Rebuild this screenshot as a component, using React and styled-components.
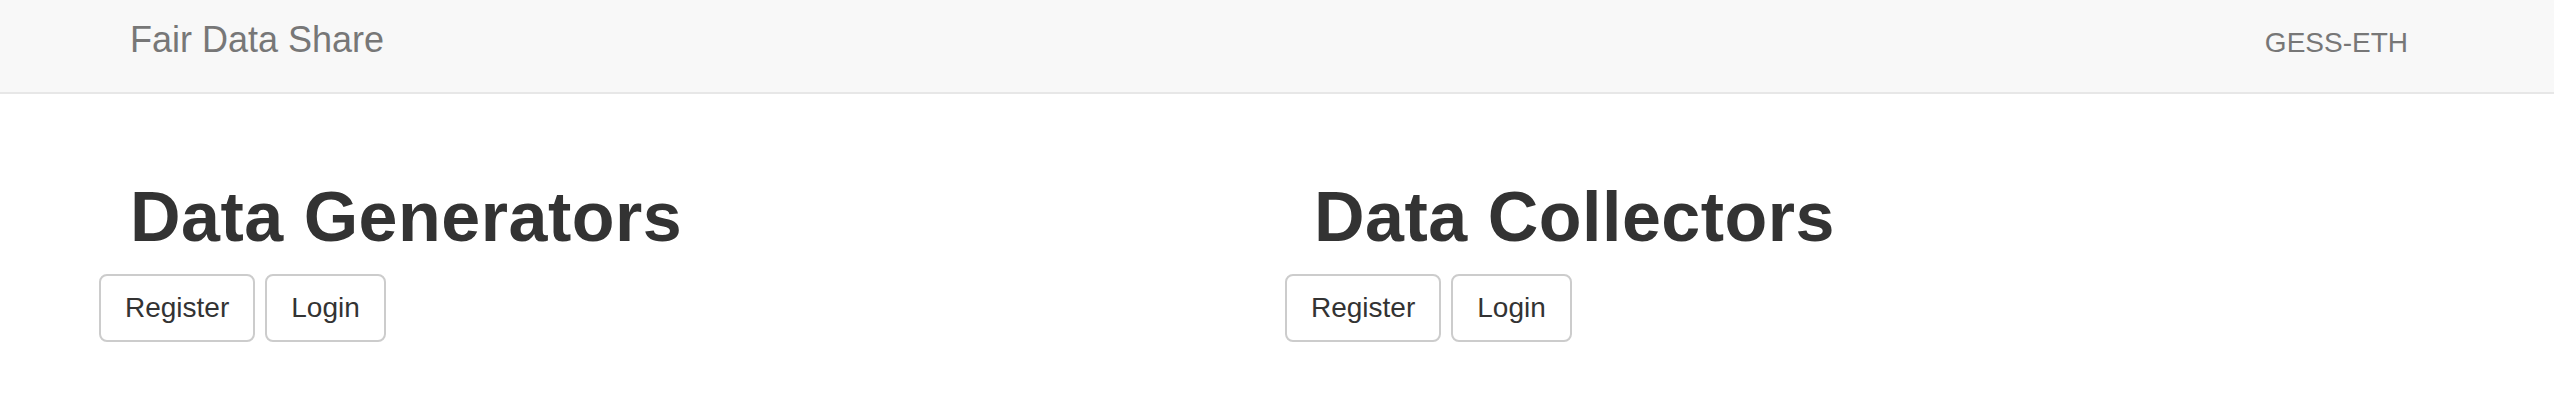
import React from "react";
import styled, { createGlobalStyle } from "styled-components";

const GlobalStyle = createGlobalStyle`
    html, body {
        margin: 0;
        padding: 0;
        background: #fff;
        font-family: "Liberation Sans", Arial, Helvetica, sans-serif;
        color: #333;
    }
`

const Navbar = styled.nav`
    display: flex;
    justify-content: space-between;
    align-items: flex-start;
    height: 92px;
    padding: 0 146px 0 130px;
    background: #f8f8f8;
    border-bottom: 2px solid #e7e7e7;
`

const Brand = styled.a`
    margin-top: 20px;
    font-size: 36px;
    line-height: 40px;
    color: #777;
    text-decoration: none;
`

const NavLink = styled.a`
    margin-top: 27px;
    font-size: 28px;
    line-height: 32px;
    color: #777;
    text-decoration: none;
`

const Columns = styled.main`
    display: grid;
    grid-template-columns: 1186px 1186px;
    padding: 0 0 0 99px;
`

const Column = styled.section`
    display: flex;
    flex-direction: column;
    align-items: flex-start;
`

const Title = styled.h1`
    margin: 84px 0 17px ${p => p.indent}px;
    font-size: 70px;
    line-height: 79px;
    font-weight: 700;
    letter-spacing: 0.5px;
    color: #333;
`

const ButtonRow = styled.div`
    display: flex;
    gap: 10px;
`

const Button = styled.button`
    padding: 12px 24px;
    font-family: inherit;
    font-size: 28px;
    line-height: 40px;
    color: #333;
    background: #fff;
    border: 2px solid #ccc;
    border-radius: 8px;
    cursor: pointer;
`

const groups = [
    { title: "Data Generators", indent: 31 },
    { title: "Data Collectors", indent: 29 },
]

const App = () => {
    return (
        <>
            <GlobalStyle />
            <Navbar>
                <Brand href="#">Fair Data Share</Brand>
                <NavLink href="#">GESS-ETH</NavLink>
            </Navbar>
            <Columns>
                {groups.map(g => (
                    <Column key={g.title}>
                        <Title indent={g.indent}>{g.title}</Title>
                        <ButtonRow>
                            <Button>Register</Button>
                            <Button>Login</Button>
                        </ButtonRow>
                    </Column>
                ))}
            </Columns>
        </>
    )
}

export default App
